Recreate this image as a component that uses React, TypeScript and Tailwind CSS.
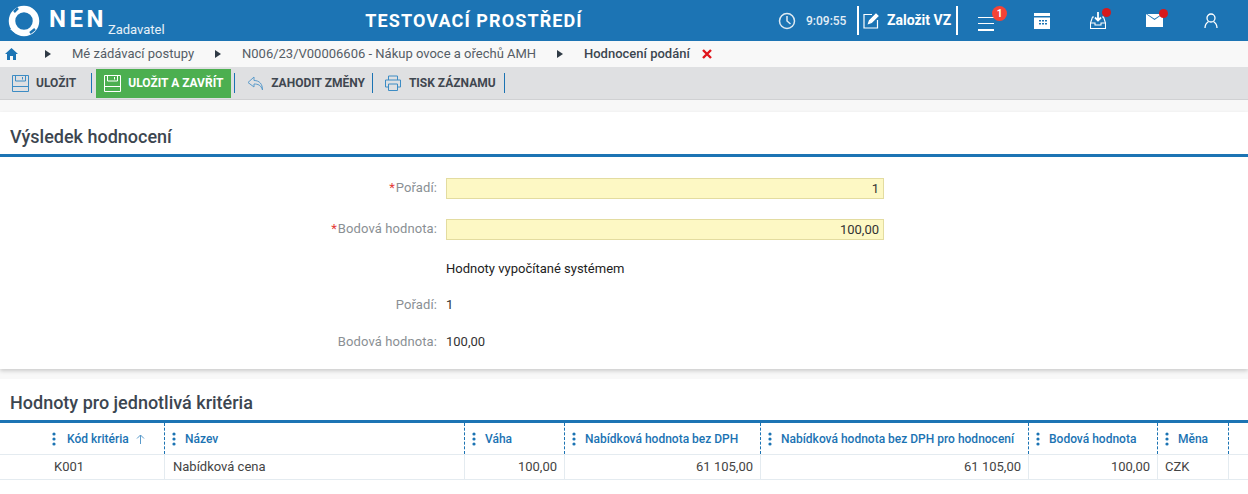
import React from "react";

const Logo = () => (
  <svg width="36" height="34" viewBox="0 0 36 34" className="shrink-0">
    <circle cx="18" cy="17" r="12" fill="none" stroke="#fff" strokeWidth="6.5" />
    <path d="M4 25 C10 31 20 33 27 28 L20 27 C13 27 8 25 4 25Z" fill="#fff" />
    <path d="M8 8 L12 4 M24 29 L29 25" stroke="#1b73b3" strokeWidth="2.5" />
  </svg>
);

const Sep = () => <div className="w-px h-[20px] bg-[#1b73b3]" />;

const SaveIcon = ({ c }: { c: string }) => (
  <svg width="17" height="17" viewBox="0 0 17 17" fill="none" stroke={c} strokeWidth="1">
    <path d="M.5.5h16v16H.5z" />
    <path d="M3.5.5v5.5h10V.5M10.5 2v2.5" />
    <path d="M.5 11.5h16" />
  </svg>
);

const Crumb = ({ children, w, bold }: { children: React.ReactNode; w: string; bold?: boolean }) => (
  <div className={`flex items-center ${w}`}>
    <svg width="6" height="8" viewBox="0 0 6 8" className="shrink-0"><path d="M0 0l6 4-6 4z" fill="#2f3a45" /></svg>
    <span className={`ml-[21px] text-[13px] whitespace-nowrap ${bold ? "font-medium text-[#3c4650]" : "text-[#555d66]"}`}>{children}</span>
  </div>
);

const FieldRow = ({ label, req, value, input, h }: { label: string; req?: boolean; value: string; input?: boolean; h: string }) => (
  <div className={`flex items-center ${h}`}>
    <div className="w-[437px] text-right text-[13px] text-[#8a8f94] tracking-[0.1px]">
      {req && <span className="text-[#e53935] mr-[1px]">*</span>}
      {label}:
    </div>
    {input ? (
      <div className="ml-[9px] w-[438px] h-[21px] bg-[#fdf8c4] border border-[#e3dca0] text-right pr-[4px] text-[13px] leading-[19px] text-[#333]">{value}</div>
    ) : (
      <div className="ml-[9px] text-[13px] text-[#333]">{value}</div>
    )}
  </div>
);

const widths = ["w-[46px]", "w-[119px]", "w-[300px]", "w-[100px]", "w-[196px]", "w-[268px]", "w-[129px]", "w-[71px]"];

const Dots = () => (
  <svg width="4" height="14" viewBox="0 0 4 14" className="shrink-0" fill="#1b73b3">
    <circle cx="2" cy="2" r="1.6" /><circle cx="2" cy="7" r="1.6" /><circle cx="2" cy="12" r="1.6" />
  </svg>
);

const Head = ({ w, label, sort, first }: { w: string; label: string; sort?: boolean; first?: boolean }) => (
  <div className={`${w} h-full flex items-center border-r border-dashed border-[#1b73b3] ${first ? "pl-[6px]" : "pl-[7px]"}`}>
    <Dots />
    <span className={`${first ? "ml-[11px]" : "ml-[9px]"} text-[12px] font-medium text-[#1b73b3] whitespace-nowrap`}>{label}</span>
    {sort && (
      <svg width="9" height="10" viewBox="0 0 9 10" className="ml-[7px]" fill="none" stroke="#5a9bcb" strokeWidth="1"><path d="M4.5 10V1M1 4.5l3.5-3.5 3.5 3.5" /></svg>
    )}
  </div>
);

const Cell = ({ w, children, right }: { w: string; children?: React.ReactNode; right?: boolean }) => (
  <div className={`${w} h-full flex items-center border-r border-[#e4ebf0] text-[13px] text-[#444] ${right ? "justify-end pr-[7px]" : "pl-[7px]"}`}>{children}</div>
);

export default function App() {
  return (
    <div className="w-[1248px] h-[494px] overflow-hidden bg-[#f8f8f8] flex flex-col" style={{ fontFamily: "Roboto, sans-serif" }}>
      <header className="h-[41px] bg-[#1c74b4] flex items-center text-white shrink-0 relative">
        <div className="pl-[6px] flex items-center w-[300px]">
          <Logo />
          <span className="ml-[7px] text-[24px] font-bold tracking-[3.5px] leading-none mb-[3px]">NEN</span>
          <span className="ml-[1px] mt-[17px] text-[13px] text-white/90 leading-none">Zadavatel</span>
        </div>
        <div className="w-[348px] text-center ml-[0px] text-[18px] font-bold tracking-[1.1px] -translate-x-[0px]">TESTOVACÍ PROSTŘEDÍ</div>
        <div className="flex items-center ml-[130px]">
          <svg width="18" height="18" viewBox="0 0 18 18" fill="none" stroke="#dfeaf3" strokeWidth="1.5"><circle cx="9" cy="9" r="7.5" /><path d="M9 4v5l3.5 3" /></svg>
          <span className="ml-[10px] w-[43px] text-[12px] font-medium text-[#e4eef6]">9:09:55</span>
          <div className="ml-[8px] w-[2px] h-[29px] bg-white" />
          <svg width="17" height="17" viewBox="0 0 17 17" fill="none" stroke="#fff" strokeWidth="1.2" className="ml-[4px]"><path d="M9 2.5H1v13.5h13.5V8" /><path d="M5.5 11.5l1-3 6.5-6.5 2 2-6.5 6.5z" fill="#fff" /></svg>
          <span className="ml-[7px] text-[14px] font-bold whitespace-nowrap">Založit VZ</span>
          <div className="ml-[5px] w-[2px] h-[29px] bg-white" />
        </div>
        <div className="relative ml-[20px] w-[16px] h-[14px] flex flex-col justify-between mt-[6px]">
          <div className="h-[1.5px] bg-white" /><div className="h-[1.5px] bg-white" /><div className="h-[1.5px] bg-white" />
          <div className="absolute -top-[11px] left-[14px] w-[15px] h-[15px] rounded-full bg-[#f44336] text-[10px] font-bold text-center leading-[15px]">1</div>
        </div>
        <svg width="16" height="16" viewBox="0 0 16 16" className="ml-[40px]" fill="#fff"><path d="M0 0h16v3H0z" /><path fillRule="evenodd" d="M0 4.5h16V16H0zM5 7h2v1.5H5zm3 0h2v1.5H8zm3 0h2v1.5h-2zM5 10h2v1.5H5zm3 0h2v1.5H8zm3 0h2v1.5h-2z" /></svg>
        <div className="relative ml-[40px] w-[16px] h-[17px]">
          <svg width="16" height="17" viewBox="0 0 16 17" fill="none" stroke="#fff" strokeWidth="1.1"><path d="M8 0v8M5 5.5L8 8.5l3-3" strokeWidth="1.8" /><path d="M4 5H2.5L.5 11v5.5h15V11l-2-6H12" /><path d="M.5 11h4.5v2h6v-2h4.5" /></svg>
          <div className="absolute -top-[4px] left-[12px] w-[9px] h-[9px] rounded-full bg-[#d7191c]" />
        </div>
        <div className="relative ml-[40px] w-[17px] h-[13px]">
          <svg width="17" height="13" viewBox="0 0 17 13" fill="#fff"><path d="M0 0l8.5 6L17 0v13H0z" /><path d="M1 0h15L8.5 4.7z" /></svg>
          <div className="absolute -top-[5px] left-[13px] w-[9px] h-[9px] rounded-full bg-[#d7191c]" />
        </div>
        <svg width="14" height="15" viewBox="0 0 14 15" className="ml-[41px]" fill="none" stroke="#fff" strokeWidth="1.3"><circle cx="7" cy="5" r="4" /><path d="M1 15c0-4 2-5.5 3.5-6.5M13 15c0-4-2-5.5-3.5-6.5" /></svg>
      </header>

      <nav className="h-[26px] flex items-center shrink-0 bg-[#f8f8f8]">
        <svg width="13" height="12" viewBox="0 0 13 12" className="ml-[5px]" fill="#1c74b4"><path d="M6.5 0L13 6h-2v6H8V8H5v4H2V6H0z" /></svg>
        <div className="ml-[27px]"><Crumb w="w-[170px]">Mé zádávací postupy</Crumb></div>
        <Crumb w="w-[342px]">N006/23/V00006606 - Nákup ovoce a ořechů AMH</Crumb>
        <Crumb w="w-[145px]" bold>Hodnocení podání</Crumb>
        <svg width="10" height="10" viewBox="0 0 10 10" stroke="#e0141b" strokeWidth="2.4"><path d="M1 1l8 8M9 1l-8 8" /></svg>
      </nav>

      <div className="h-[33px] bg-[#dfe0e2] flex items-center shrink-0 border-b border-[#d0d1d3] text-[12px] font-bold text-[#3f4750]">
        <div className="ml-[12px]"><SaveIcon c="#3d8cc4" /></div>
        <span className="ml-[7px]">ULOŽIT</span>
        <div className="ml-[15px]"><Sep /></div>
        <div className="ml-[4px] w-[135px] h-[29px] bg-[#4caf50] flex items-center text-white">
          <div className="ml-[8px]"><SaveIcon c="#fff" /></div>
          <span className="ml-[7px]">ULOŽIT A ZAVŘÍT</span>
        </div>
        <div className="ml-[3px]"><Sep /></div>
        <svg width="17" height="15" viewBox="0 0 17 15" className="ml-[12px]" fill="none" stroke="#5a9bcb" strokeWidth="1"><path d="M7 1L1 6.5 7 11V8c4 0 7 1 8.5 6 0-6-3-9.5-8.5-9.5z" /></svg>
        <span className="ml-[7px]">ZAHODIT ZMĚNY</span>
        <div className="ml-[7px]"><Sep /></div>
        <svg width="16" height="16" viewBox="0 0 16 16" className="ml-[12px]" fill="none" stroke="#3d8cc4" strokeWidth="1"><path d="M3.5 5V1h9v4M3.5 12H.5V5h15v7h-3" /><path d="M3.5 9h9v6.5h-9z" /></svg>
        <span className="ml-[8px]">TISK ZÁZNAMU</span>
        <div className="ml-[8px]"><Sep /></div>
      </div>

      <section className="mt-[12px] h-[257px] bg-white shadow-[0_2px_4px_rgba(0,0,0,0.18)] shrink-0">
        <div className="h-[45px] border-b-[3px] border-[#1c74b4] flex items-center pl-[10px] text-[18px] font-medium text-[#3c4650] pt-[7px]">Výsledek hodnocení</div>
        <div className="pt-[17px]">
          <FieldRow h="h-[28px]" label="Pořadí" req input value="1" />
          <FieldRow h="h-[28px] mt-[13px]" label="Bodová hodnota" req input value="100,00" />
          <div className="ml-[446px] mt-[12px] text-[13px] text-[#222] leading-[28px] h-[28px]">Hodnoty vypočítané systémem</div>
          <FieldRow h="h-[28px] mt-[8px]" label="Pořadí" value="1" />
          <FieldRow h="h-[28px] mt-[9px]" label="Bodová hodnota" value="100,00" />
        </div>
      </section>

      <section className="mt-[10px] flex-1 bg-white">
        <div className="h-[44px] border-b-[3px] border-[#1c74b4] flex items-center pl-[10px] text-[18px] font-medium text-[#3c4650] pt-[6px]">Hodnoty pro jednotlivá kritéria</div>
        <div className="h-[32px] flex border-b border-[#e4ebf0] w-[1248px]">
          <div className={`${widths[0]} shrink-0`} />
          <Head first w={widths[1]} label="Kód kritéria" sort />
          <Head w={widths[2]} label="Název" />
          <Head w={widths[3]} label="Váha" />
          <Head w={widths[4]} label="Nabídková hodnota bez DPH" />
          <Head w={widths[5]} label="Nabídková hodnota bez DPH pro hodnocení" />
          <Head w={widths[6]} label="Bodová hodnota" />
          <Head w={widths[7]} label="Měna" />
        </div>
        <div className="h-[25px] flex border-b border-[#e4ebf0]">
          <div className={`${widths[0]} shrink-0`} />
          <Cell w={widths[1]}><span className="ml-[1px]">K001</span></Cell>
          <Cell w={widths[2]}><span className="ml-[1px]">Nabídková cena</span></Cell>
          <Cell w={widths[3]} right>100,00</Cell>
          <Cell w={widths[4]} right>61 105,00</Cell>
          <Cell w={widths[5]} right>61 105,00</Cell>
          <Cell w={widths[6]} right>100,00</Cell>
          <Cell w={widths[7]}>CZK</Cell>
        </div>
      </section>
    </div>
  );
}
